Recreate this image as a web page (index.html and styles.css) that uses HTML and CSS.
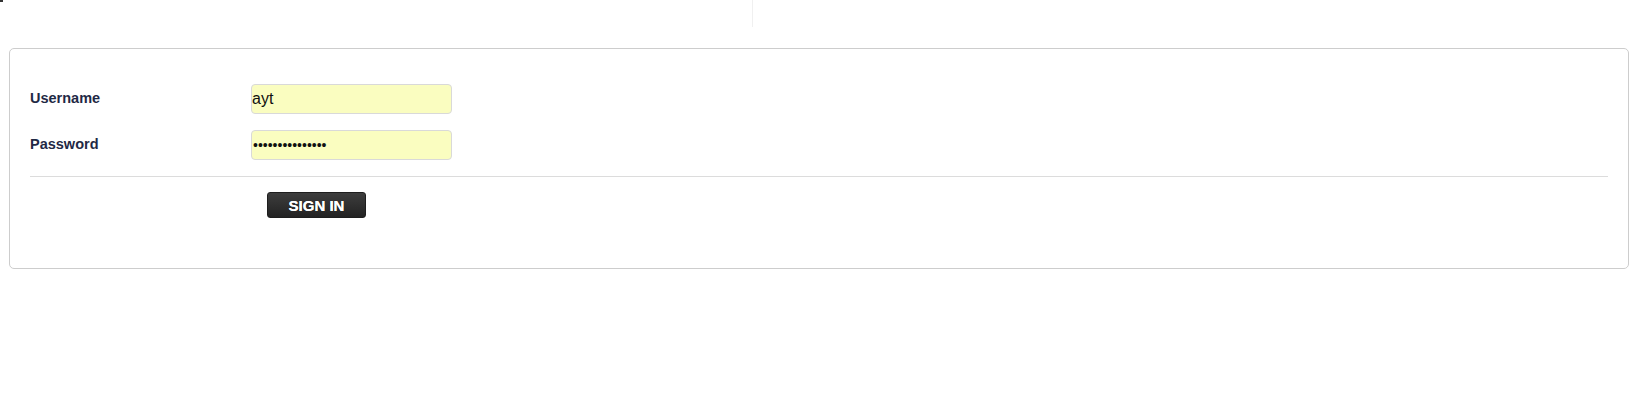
FILE: index.html
```html
<!DOCTYPE html>
<html>
<head>
<meta charset="utf-8">
<link rel="stylesheet" href="styles.css">
</head>
<body>
<span class="mark"></span>
<div class="header">
  <div class="header-left"></div>
  <div class="header-right"></div>
</div>
<form class="panel">
  <div class="row">
    <label class="label" for="u">Username</label>
    <input class="field" id="u" type="text" value="ayt">
  </div>
  <div class="row">
    <label class="label" for="p">Password</label>
    <input class="field pw" id="p" type="password" value="aaaaaaaaaaaaaaa">
  </div>
  <div class="divider"></div>
  <div class="actions">
    <button class="btn" type="button">SIGN IN</button>
  </div>
</form>
</body>
</html>
```

FILE: styles.css
```css
html, body {
  margin: 0;
  padding: 0;
  background: #fff;
  font-family: "Liberation Sans", Arial, sans-serif;
}
.mark {
  position: absolute;
  left: 0;
  top: 0;
  width: 3px;
  height: 2px;
  background: #333;
}
.header {
  display: flex;
  height: 27px;
}
.header-left {
  width: 752px;
}
.header-right {
  flex: 1;
  border-left: 1px solid #f0f0f0;
}
.panel {
  margin: 21px 0 0 9px;
  width: 1620px;
  height: 221px;
  box-sizing: border-box;
  border: 1px solid #cdcdcd;
  border-radius: 5px;
  padding: 35px 20px 0 20px;
}
.row {
  display: flex;
  align-items: flex-start;
  height: 30px;
  margin-bottom: 16px;
}
.label {
  width: 221px;
  padding-top: 6px;
  font-size: 14.5px;
  font-weight: bold;
  color: #1f2945;
}
.field {
  width: 201px;
  height: 30px;
  box-sizing: border-box;
  margin: 0;
  padding: 0;
  border: 1px solid #d9d9d9;
  border-radius: 4px;
  background: #fafdc0;
  font-family: "Liberation Sans", Arial, sans-serif;
  font-size: 16px;
  color: #111;
  outline: none;
}
.pw {
  font-size: 14px;
  padding-left: 1px;
}
.divider {
  height: 1px;
  background: #dcdcdc;
}
.actions {
  padding: 15px 0 0 237px;
}
.btn {
  width: 99px;
  height: 26px;
  margin: 0;
  padding: 2px 0 0 0;
  border: 1px solid #1e1e1e;
  border-radius: 3px;
  background: linear-gradient(#3d3d3d, #232323);
  color: #fff;
  font-family: "Liberation Sans", Arial, sans-serif;
  font-size: 15px;
  font-weight: bold;
  line-height: 22px;
  text-shadow: 0 0 0.4px #fff;
}
```
